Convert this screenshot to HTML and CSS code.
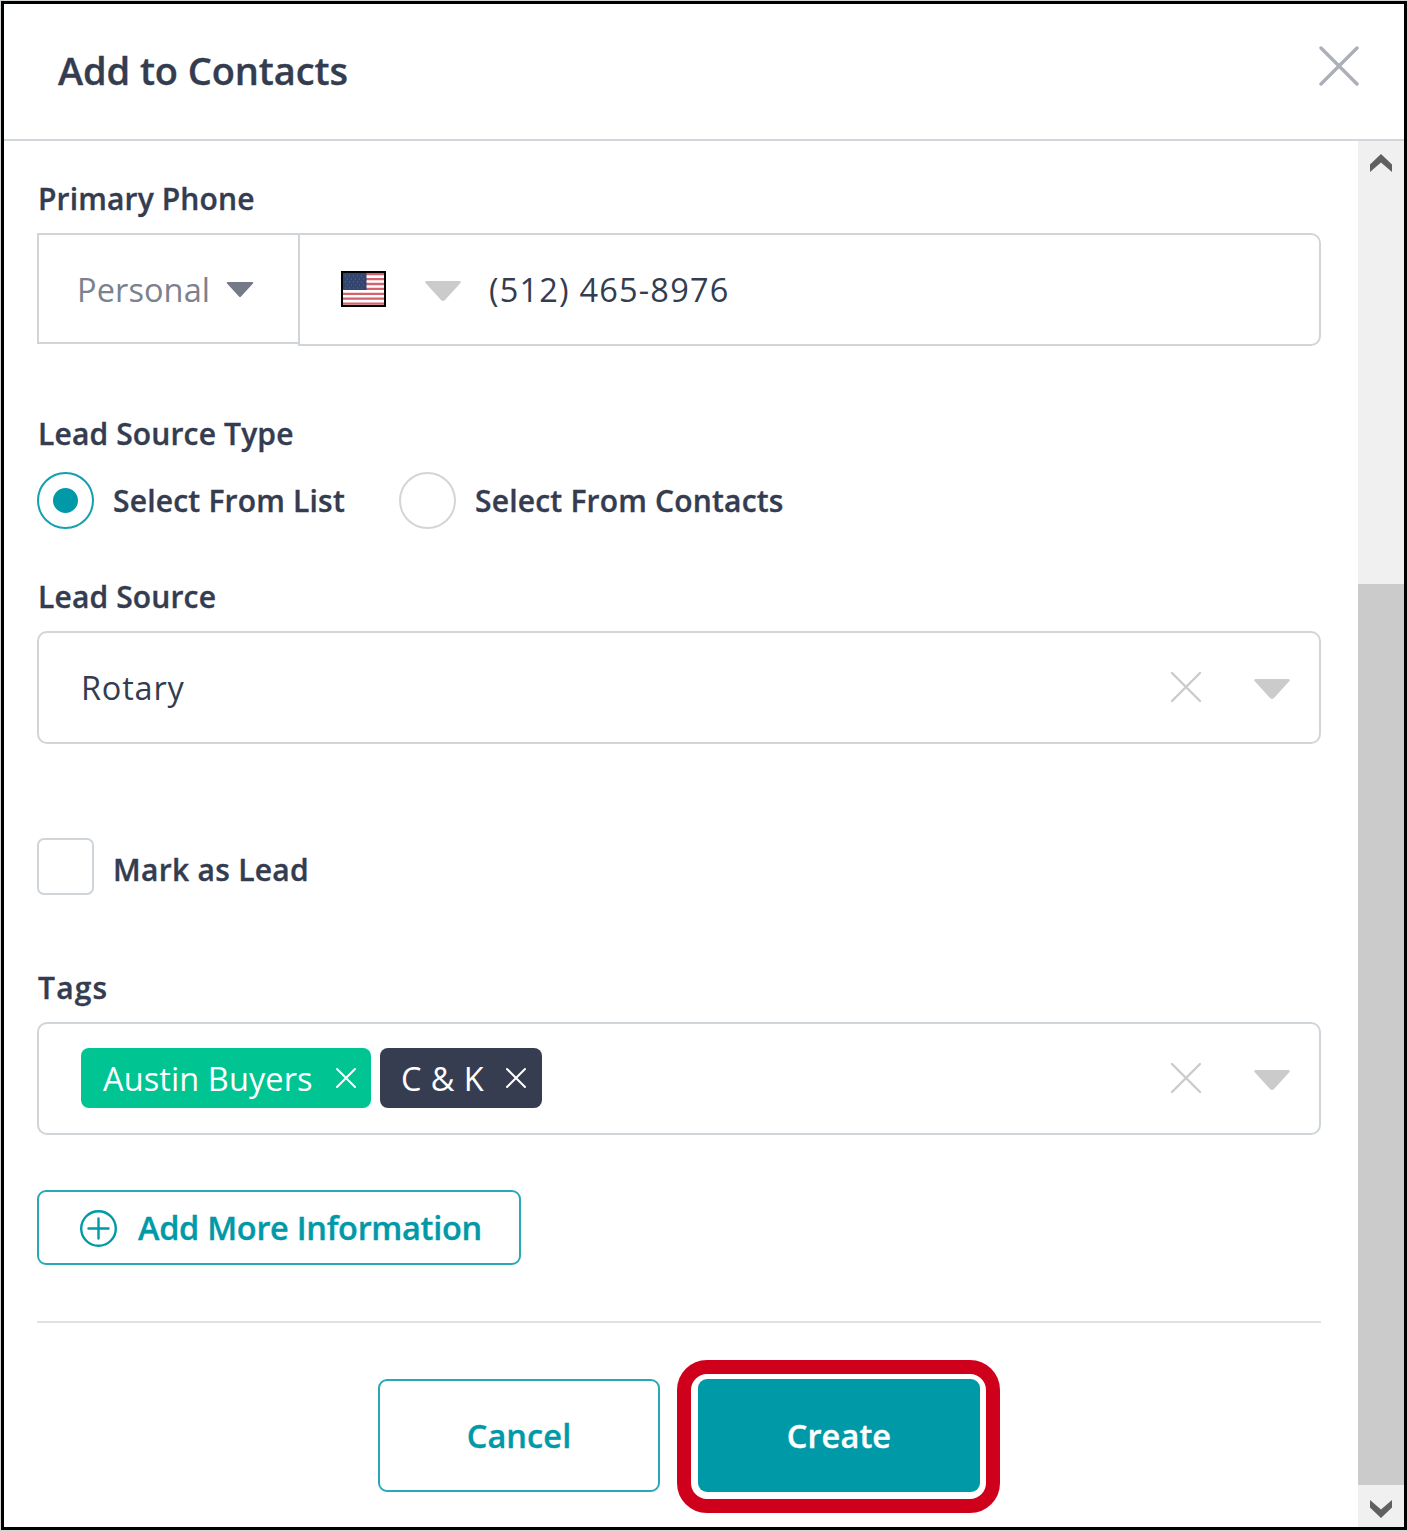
FILE: index.html
```html
<!DOCTYPE html>
<html lang="en">
<head>
<meta charset="utf-8">
<title>Add to Contacts</title>
<link rel="stylesheet" href="styles.css">
</head>
<body>
<div class="dialog">
  <header class="header">
    <h1 class="title">Add to Contacts</h1>
    <svg class="close" width="40" height="40" viewBox="0 0 40 40"><path d="M2 2 38 38M38 2 2 38"/></svg>
  </header>
  <div class="main">
    <form class="form">
      <div class="label">Primary Phone</div>
      <div class="phone">
        <div class="phone-type"><span>Personal</span>
          <svg width="28" height="16" viewBox="0 0 28 16"><path fill="#747a87" d="M1.500 0h25q1.500.5.5 1.500L15 14.500q-1 1-2 0L1 1.500Q0 .500 1.500 0z"/></svg>
        </div>
        <div class="phone-number">
          <svg class="flag" width="45" height="36" viewBox="0 0 45 36">
            <path fill="#000" d="M0 0h45v36H0z"/><path fill="#fff" d="M2 2h41v32H2z"/>
            <path stroke="#d3636d" stroke-width="2.300" d="M2 3.200h41M2 8.100h41M2 13h41M2 17.900h41M2 22.800h41M2 27.700h41M2 32.700h41"/>
            <path fill="#32456f" d="M2 2h23.500v17H2z"/>
            <path stroke="#5d6f95" stroke-width="1" stroke-dasharray="1 3" d="M4 5h20M6 8h18M4 11h20M6 14h18M4 17h20"/>
          </svg>
          <svg class="caret phone-caret" width="36" height="21" viewBox="0 0 36 21"><path d="M1.500 0h33q2 .500 1 2L20 19q-2 2-4 0L.500 2q-1-1.500 1-2z"/></svg>
          <span class="number">(512) 465-8976</span>
        </div>
      </div>

      <div class="label label-type">Lead Source Type</div>
      <div class="radios">
        <div class="option option-list"><i class="radio radio-on"></i><span>Select From List</span></div>
        <div class="option"><i class="radio"></i><span>Select From Contacts</span></div>
      </div>

      <div class="label label-source">Lead Source</div>
      <div class="field">
        <span class="value">Rotary</span>
        <svg class="clear" width="32" height="32" viewBox="0 0 32 32"><path d="M2 2 30 30M30 2 2 30"/></svg>
        <svg class="caret" width="36" height="21" viewBox="0 0 36 21"><path d="M1.500 0h33q2 .500 1 2L20 19q-2 2-4 0L.500 2q-1-1.500 1-2z"/></svg>
      </div>

      <div class="option mark"><i class="checkbox"></i><span>Mark as Lead</span></div>

      <div class="label label-tags">Tags</div>
      <div class="field">
        <div class="tags">
          <span class="tag tag-green"><span>Austin Buyers</span><svg width="22" height="22" viewBox="0 0 22 22"><path d="M2 2 20 20M20 2 2 20"/></svg></span>
          <span class="tag tag-dark"><span>C &amp; K</span><svg width="22" height="22" viewBox="0 0 22 22"><path d="M2 2 20 20M20 2 2 20"/></svg></span>
        </div>
        <svg class="clear" width="32" height="32" viewBox="0 0 32 32"><path d="M2 2 30 30M30 2 2 30"/></svg>
        <svg class="caret" width="36" height="21" viewBox="0 0 36 21"><path d="M1.500 0h33q2 .500 1 2L20 19q-2 2-4 0L.500 2q-1-1.500 1-2z"/></svg>
      </div>

      <div class="more">
        <svg width="38" height="38" viewBox="0 0 38 38"><circle cx="19.500" cy="19.500" r="17.300"/><path d="M19.500 9.500v20M9.500 19.500h20"/></svg>
        <span>Add More Information</span>
      </div>

      <div class="actions">
        <div class="button cancel">Cancel</div>
        <div class="highlight"><div class="button create">Create</div></div>
      </div>
    </form>
    <div class="scrollbar">
      <svg class="up" width="22" height="18" viewBox="0 0 22 18"><path d="M11 0 22 10.500V18L11 8.500 0 18v-7.500z"/></svg>
      <div class="thumb"></div>
      <svg class="down" width="22" height="18" viewBox="0 0 22 18"><path d="M11 18 22 7.500V0L11 9.500 0 0v7.500z"/></svg>
    </div>
  </div>
</div>
</body>
</html>
```

FILE: styles.css
```css
* { box-sizing: border-box; }
body { margin: 0; background: #d3d8d5; font-family: "Open Sans", "Noto Sans", sans-serif; color: #343c50; }
svg { display: block; flex: none; }

.dialog { width: 1406px; height: 1529px; margin: 1px; border: 3px solid #000; background: #fff; display: flex; flex-direction: column; }
.header { height: 137px; flex: none; border-bottom: 2px solid #d2d6da; padding: 0 45px 0 54px; display: flex; align-items: center; justify-content: space-between; }
.title { margin: 0 0 3px; font-size: 38px; line-height: 52px; font-weight: 600; letter-spacing: -.1px; }
.close { margin-bottom: 11px; fill: none; stroke: #acafb7; stroke-width: 3.400; stroke-linecap: round; }
.title, .label, .option, .more, .button { -webkit-text-stroke: .35px currentColor; }

.main { flex: 1; min-height: 0; display: flex; }
.form { width: 1354px; padding: 38px 37px 0 33px; display: flex; flex-direction: column; }
.label { font-size: 30px; line-height: 40px; font-weight: 600; padding-left: 1px; margin-bottom: 14px; white-space: nowrap; letter-spacing: .150px; }

.phone { display: flex; align-items: flex-start; font-size: 32.500px; line-height: 44px; }
.phone-type { width: 261px; height: 111px; border: 2px solid #d0d5d9; border-right: 0; padding: 2px 0 0 38px; display: flex; align-items: center; gap: 16px; color: #7b818e; letter-spacing: .100px; }
.phone-number { flex: 1; height: 113px; border: 2px solid #d0d5d9; border-radius: 0 10px 10px 0; display: flex; align-items: center; padding-left: 41px; }
.flag { margin-bottom: 1px; }
.phone-caret { margin-left: 39px; }
.number { margin-left: 28px; letter-spacing: 1.180px; }
.caret { fill: #cbcbcb; position: relative; top: 2px; }

.label-type { margin-top: 68px; margin-bottom: 18px; }
.radios { display: flex; }
.option { display: flex; align-items: center; gap: 19px; font-size: 30px; line-height: 40px; font-weight: 600; white-space: nowrap; letter-spacing: .200px; }
.option-list { width: 362px; }
.radio { width: 57px; height: 57px; border: 2px solid #d3d6d9; border-radius: 50%; display: grid; place-items: center; flex: none; }
.radio-on { border-color: #14a0ad; }
.radio-on::after { content: ""; width: 25px; height: 25px; border-radius: 50%; background: #0099a8; }
.label-source { margin-top: 48px; }

.field { height: 113px; flex: none; border: 2px solid #d0d5d9; border-radius: 10px; padding: 0 29px 0 42px; display: flex; align-items: center; font-size: 32.500px; line-height: 44px; }
.value { margin-right: auto; letter-spacing: .800px; }
.clear { margin-right: 52px; margin-bottom: 2px; fill: none; stroke: #cbcbcb; stroke-width: 2.400; stroke-linecap: round; }

.mark { height: 57px; margin-top: 94px; }
.mark span { padding-top: 7px; letter-spacing: .300px; }
.checkbox { width: 57px; height: 57px; border: 2px solid #d0d5d9; border-radius: 7px; flex: none; }
.label-tags { margin-top: 73px; letter-spacing: 1.200px; }

.tags { display: flex; gap: 9px; margin: 0 auto 1px 0; }
.tag { height: 60px; border-radius: 8px; color: #fff; display: flex; align-items: center; justify-content: space-between; padding: 0 14px 0 22px; white-space: nowrap; }
.tag > span { padding-top: 2px; }
.tag svg { fill: none; stroke: #fff; stroke-width: 2; stroke-linecap: round; }
.tag-green { width: 290px; background: #00c492; letter-spacing: .100px; }
.tag-dark { width: 162px; background: #373d50; padding: 0 15px 0 21px; letter-spacing: .400px; }

.more { width: 484px; height: 75px; margin-top: 55px; border: 2px solid #2aa9b5; border-radius: 9px; display: flex; align-items: center; gap: 21px; padding-left: 40px; color: #0099a8; font-size: 32.500px; line-height: 44px; font-weight: 600; letter-spacing: -.300px; white-space: nowrap; }
.more svg { fill: none; stroke: #0099a8; stroke-width: 2.400; stroke-linecap: round; }

.actions { margin-top: 56px; border-top: 2px solid #dfe2e4; padding-top: 37px; padding-left: 341px; display: flex; align-items: flex-start; gap: 17px; }
.button { width: 282px; height: 113px; border-radius: 9px; display: grid; place-items: center; font-size: 32.500px; line-height: 44px; font-weight: 600; letter-spacing: .100px; }
.cancel { border: 2px solid #2aa9b5; color: #0099a8; margin-top: 19px; }
.create { background: #0099a8; color: #fff; }
.highlight { width: 323px; height: 153px; border: 14px solid #cf001c; border-radius: 30px; padding: 5px 0 0 7px; }

.scrollbar { width: 46px; background: #f0f0f0; display: flex; flex-direction: column; align-items: center; justify-content: space-between; padding: 13px 0 9px; }
.scrollbar svg { fill: #606060; }
.thumb { width: 46px; height: 901px; background: #cbcbcb; margin-top: auto; margin-bottom: 15px; }
```
